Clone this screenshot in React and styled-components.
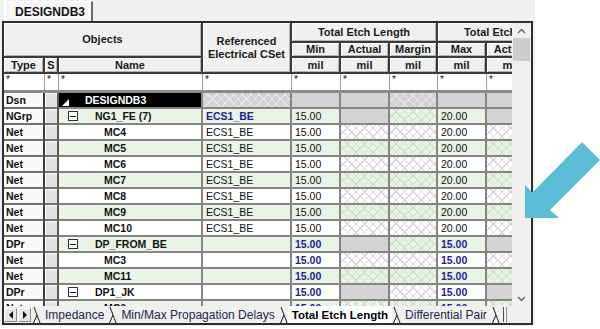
import React from 'react';
import styled, { createGlobalStyle, css } from 'styled-components';

const GlobalStyle = createGlobalStyle`
  html, body {
    margin: 0;
    padding: 0;
    background: #fff;
  }
  body {
    font-family: "Liberation Sans", Arial, sans-serif;
    color: #111;
  }
`;

const GREEN = '#e8f5e5';
const SOLID = '#d4d4d4';
const BLUE = '#1d1d94';
const LINE = '#858585';

const hatch = (base, line) => css`
  background-color: ${base};
  background-image:
    repeating-linear-gradient(45deg, ${line} 0 1px, transparent 1px 6px),
    repeating-linear-gradient(-45deg, ${line} 0 1px, transparent 1px 6px);
`;

const Page = styled.div`
  position: relative;
  width: 600px;
  height: 329px;
  overflow: hidden;
  background: #fff;
`;

const Window = styled.div`
  width: 535px;
  height: 326px;
  background: #f0f0f0;
  display: flex;
  flex-direction: column;
`;

const TopStrip = styled.div`
  height: 21px;
  display: flex;
  align-items: flex-end;
  padding-left: 4px;
`;

const DocTab = styled.div`
  height: 19px;
  padding: 0 6px 0 10px;
  display: flex;
  align-items: center;
  background: #f6f6f6;
  border-left: 1px solid #fff;
  border-top: 1px solid #fff;
  border-right: 2px solid #6a6a6a;
  font-weight: bold;
  font-size: 12px;
  color: #141414;
`;

const Frame = styled.div`
  margin-left: 2px;
  width: 531px;
  height: 304px;
  box-sizing: border-box;
  border: 2px solid #2e2e2e;
  display: flex;
`;

const GridArea = styled.div`
  width: 508px;
  display: flex;
  flex-direction: column;
`;

const Viewport = styled.div`
  flex: 1;
  overflow: hidden;
  background: #fff;
`;

const Sheet = styled.div`
  display: grid;
  grid-template-columns: 41px 14px 144px 89px 49px 49px 48px 49px 49px 48px;
  grid-template-rows: 20px 15px 16px 19px;
  grid-auto-rows: 16px;
  width: max-content;
`;

const HeadCell = styled.div`
  grid-area: ${p => p.$area};
  box-sizing: border-box;
  display: flex;
  align-items: center;
  justify-content: center;
  text-align: center;
  white-space: nowrap;
  overflow: hidden;
  background: #f0f0f0;
  border-right: 2px solid #3a3a3a;
  border-bottom: 2px solid #3a3a3a;
  box-shadow: inset 1px 1px 0 #fff, inset -1px -1px 0 #b4b4b4;
  font-size: 11px;
  font-weight: bold;
  line-height: 13px;
  color: #1a1a1a;
`;

const FilterCell = styled.div`
  box-sizing: border-box;
  background: #fff;
  border-right: 1px solid #9a9a9a;
  border-bottom: 3px solid #8a8a8a;
  padding: 1px 0 0 2px;
  font-size: 10px;
  line-height: 10px;
`;

const TypeCell = styled.div`
  box-sizing: border-box;
  background: #f8f8f8;
  border-right: 2px solid #3a3a3a;
  border-bottom: 2px solid #707070;
  box-shadow: inset 1px 1px 0 #fff;
  padding-left: 2px;
  font-size: 10.5px;
  font-weight: bold;
  line-height: 14px;
`;

const SelCell = styled.div`
  box-sizing: border-box;
  background: #e2e2e2;
  border-right: 2px solid #5a5a5a;
  border-bottom: 2px solid #707070;
  box-shadow: inset 1px 1px 0 #fff;
`;

const NameCell = styled.div`
  box-sizing: border-box;
  display: flex;
  align-items: center;
  padding-left: ${p => p.$indent}px;
  background: ${p => (p.$design ? '#000' : p.$alt ? GREEN : '#fff')};
  color: ${p => (p.$design ? '#fff' : '#111')};
  border-right: 2px solid ${LINE};
  border-bottom: 2px solid ${LINE};
  font-size: 10.5px;
  font-weight: bold;
  white-space: nowrap;
  position: relative;
`;

const Corner = styled.span`
  position: absolute;
  left: 3px;
  bottom: 1px;
  width: 0;
  height: 0;
  border-left: 7px solid transparent;
  border-bottom: 7px solid #fff;
`;

const Expander = styled.span`
  box-sizing: border-box;
  width: 10px;
  height: 10px;
  margin-right: 17px;
  border: 1px solid #303030;
  background: #fff;
  display: flex;
  align-items: center;
  justify-content: center;

  &::after {
    content: '';
    width: 6px;
    height: 1px;
    background: #202020;
  }
`;

const DataCell = styled.div`
  box-sizing: border-box;
  border-right: 2px solid ${LINE};
  border-bottom: 2px solid ${LINE};
  padding-left: 3px;
  font-size: 10.5px;
  line-height: 14px;
  white-space: nowrap;
  overflow: hidden;
  color: ${p => (p.$blue ? BLUE : '#111')};
  font-weight: ${p => (p.$bold ? 'bold' : 'normal')};
  background: ${p => (p.$alt ? GREEN : '#fff')};
  ${p => p.$fill === 'solid' && css`background: ${SOLID};`}
  ${p => p.$fill === 'hatch' && (p.$alt ? hatch(GREEN, '#cde0ca') : hatch('#fff', '#d6d6d6'))}
  ${p => p.$fill === 'grayhatch' && hatch('#d2d2d2', '#e6e6e6')}
`;

const TabBar = styled.div`
  height: 17px;
  display: flex;
  align-items: center;
  background: #f0f0f0;
  font-size: 12px;
`;

const NavButton = styled.span`
  box-sizing: border-box;
  width: 13px;
  height: 14px;
  margin-right: 1px;
  background: #e6e6e6;
  border-top: 1px solid #fff;
  border-left: 1px solid #fff;
  border-right: 1px solid #8a8a8a;
  border-bottom: 1px solid #8a8a8a;
  display: flex;
  align-items: center;
  justify-content: center;

  &::after {
    content: '';
    width: 0;
    height: 0;
    border-top: 4px solid transparent;
    border-bottom: 4px solid transparent;
    ${p => (p.$dir === 'left'
      ? css`border-right: 4px solid #111;`
      : css`border-left: 4px solid #111;`)}
  }
`;

const Tab = styled.span`
  height: 17px;
  display: flex;
  align-items: center;
  padding: 0 4px;
  white-space: nowrap;
  color: ${p => (p.$active ? '#000' : '#24244c')};
  font-weight: ${p => (p.$active ? 'bold' : 'normal')};
  font-size: ${p => (p.$active ? '11.5px' : '12px')};
  background: ${p => (p.$active ? '#fff' : 'transparent')};
`;

const Splitter = styled.span`
  margin-left: 3px;
  width: 2px;
  height: 15px;
  border-left: 1px solid #505050;
  border-right: 1px solid #909090;
`;

const VScroll = styled.div`
  width: 19px;
  display: flex;
  flex-direction: column;
  background: #f0f0f0;
`;

const ScrollButton = styled.div`
  height: 15px;
  display: flex;
  align-items: center;
  justify-content: center;
`;

const Thumb = styled.div`
  height: 23px;
  margin: 0 1px;
  background: #cdcdcd;
`;

const Track = styled.div`
  flex: 1;
`;

const ScrollCorner = styled.div`
  height: 17px;
`;

const Pointer = styled.svg`
  position: absolute;
  left: 0;
  top: 0;
  pointer-events: none;
`;

const Chevron = ({ up }) => (
  <svg width="9" height="6" viewBox="0 0 9 6">
    <polyline
      points={up ? '1,5 4.5,1.5 8,5' : '1,1 4.5,4.5 8,1'}
      fill="none"
      stroke="#606060"
      strokeWidth="1.3"
    />
  </svg>
);

const TabEdge = () => (
  <svg width="9" height="16" viewBox="0 0 9 16">
    <path d="M2 0 L8 16 M5 8 L1.5 16" fill="none" stroke="#1a1a1a" strokeWidth="1" />
  </svg>
);

const nets = ['MC4', 'MC5', 'MC6', 'MC7', 'MC8', 'MC9', 'MC10'];

const rows = [
  { type: 'Dsn', name: 'DESIGNDB3', kind: 'design' },
  { type: 'NGrp', name: 'NG1_FE (7)', kind: 'group', ref: 'ECS1_BE', min: '15.00', max: '20.00' },
  ...nets.map(n => ({ type: 'Net', name: n, kind: 'net', ref: 'ECS1_BE', min: '15.00', max: '20.00' })),
  { type: 'DPr', name: 'DP_FROM_BE', kind: 'pair', min: '15.00', max: '15.00' },
  { type: 'Net', name: 'MC3', kind: 'pairnet', min: '15.00', max: '15.00' },
  { type: 'Net', name: 'MC11', kind: 'pairnet', min: '15.00', max: '15.00' },
  { type: 'DPr', name: 'DP1_JK', kind: 'pair', min: '15.00', max: '15.00' },
  { type: 'Net', name: 'MC0', kind: 'pairnet', min: '15.00', max: '15.00' },
];

const tabs = ['Impedance', 'Min/Max Propagation Delays', 'Total Etch Length', 'Differential Pair'];

function valueCells(row) {
  const { kind } = row;
  if (kind === 'design') {
    return [
      { fill: 'grayhatch' }, { fill: 'solid' }, { fill: 'solid' }, { fill: 'grayhatch' },
      { fill: 'solid' }, { fill: 'solid' }, { fill: 'grayhatch' },
    ];
  }
  const blue = kind === 'pair' || kind === 'pairnet';
  const gap = kind === 'group' || kind === 'pair' ? 'solid' : 'hatch';
  return [
    { text: row.ref, bold: kind === 'group', blue: kind === 'group' },
    { text: row.min, bold: blue, blue },
    { fill: gap },
    { fill: 'hatch' },
    { text: row.max, bold: blue, blue },
    { fill: gap },
    { fill: 'hatch' },
  ];
}

export default function App() {
  return (
    <Page>
      <GlobalStyle />
      <Window>
        <TopStrip>
          <DocTab>DESIGNDB3</DocTab>
        </TopStrip>
        <Frame>
          <GridArea>
            <Viewport>
              <Sheet>
                <HeadCell $area="1 / 1 / 3 / 4">Objects</HeadCell>
                <HeadCell $area="1 / 4 / 4 / 5">Referenced<br />Electrical CSet</HeadCell>
                <HeadCell $area="1 / 5 / 2 / 8">Total Etch Length</HeadCell>
                <HeadCell $area="1 / 8 / 2 / 11">Total Etch Length</HeadCell>
                <HeadCell $area="3 / 1 / 4 / 2">Type</HeadCell>
                <HeadCell $area="3 / 2 / 4 / 3">S</HeadCell>
                <HeadCell $area="3 / 3 / 4 / 4">Name</HeadCell>
                {['Min', 'Actual', 'Margin', 'Max', 'Actual', 'Margin'].map((label, i) => (
                  <HeadCell key={`h${i}`} $area={`2 / ${5 + i} / 3 / ${6 + i}`}>{label}</HeadCell>
                ))}
                {[0, 1, 2, 3, 4, 5].map(i => (
                  <HeadCell key={`u${i}`} $area={`3 / ${5 + i} / 4 / ${6 + i}`}>mil</HeadCell>
                ))}
                {Array.from({ length: 10 }, (_, i) => (
                  <FilterCell key={`f${i}`}>*</FilterCell>
                ))}
                {rows.map((row, r) => {
                  const alt = r % 2 === 1;
                  const design = row.kind === 'design';
                  const parent = row.kind === 'group' || row.kind === 'pair';
                  const indent = design ? 26 : parent ? 9 : 45;
                  return (
                    <React.Fragment key={r}>
                      <TypeCell>{row.type}</TypeCell>
                      <SelCell />
                      <NameCell $indent={indent} $alt={alt} $design={design}>
                        {design && <Corner />}
                        {parent && <Expander />}
                        {row.name}
                      </NameCell>
                      {valueCells(row).map((c, i) => (
                        <DataCell key={i} $alt={alt} $fill={c.fill} $bold={c.bold} $blue={c.blue}>
                          {c.text}
                        </DataCell>
                      ))}
                    </React.Fragment>
                  );
                })}
              </Sheet>
            </Viewport>
            <TabBar>
              <NavButton $dir="left" />
              <NavButton $dir="right" />
              {tabs.map(t => (
                <React.Fragment key={t}>
                  <TabEdge />
                  <Tab $active={t === 'Total Etch Length'}>{t}</Tab>
                </React.Fragment>
              ))}
              <TabEdge />
              <Splitter />
            </TabBar>
          </GridArea>
          <VScroll>
            <ScrollButton><Chevron up /></ScrollButton>
            <Thumb />
            <Track />
            <ScrollButton><Chevron /></ScrollButton>
            <ScrollCorner />
          </VScroll>
        </Frame>
      </Window>
      <Pointer width="600" height="329" viewBox="0 0 600 329">
        <polygon
          points="525,218 525,185 532.5,192.5 582,142 600,160 550,210 559,218"
          fill="#5cbdd6"
        />
      </Pointer>
    </Page>
  );
}
